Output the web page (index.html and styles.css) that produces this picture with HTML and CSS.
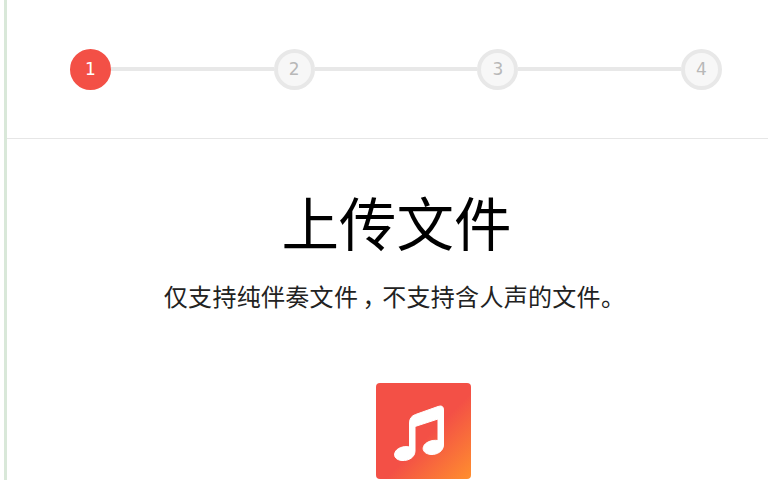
FILE: index.html
```html
<!DOCTYPE html>
<html>
<head>
    <meta charset="utf-8">
    <link rel="stylesheet" href="styles.css">
</head>
<body>
    <div class="page">
        <div class="steps">
            <div class="step active">1</div>
            <div class="line"></div>
            <div class="step">2</div>
            <div class="line"></div>
            <div class="step">3</div>
            <div class="line"></div>
            <div class="step">4</div>
        </div>

        <div class="upload">
            <h1>上传文件</h1>
            <p>仅支持纯伴奏文件<span class="comma">，</span>不支持含人声的文件。</p>
            <div class="music-icon">
                <svg width="95" height="96" viewBox="0 0 95 96">
                    <path fill="#fff" stroke="#fff" stroke-width="1" stroke-linejoin="round" d="M33.5 68V40Q33.5 33.5 39.5 31.5L62 23.5Q67.5 21.5 67.5 27V62C67.5 68 61 72 55 71.5C49 71 46 67.5 47.5 63.5C49 59.5 55.5 56.500 62 57.500V36L39 43.500V68C39 74 33 78 26 77.500C20 77 17.500 73.500 19 69.500C20.500 65.500 27 62.500 33.500 64Z"/>
                </svg>
            </div>
        </div>
    </div>
</body>
</html>
```

FILE: styles.css
```css
html, body {
    margin: 0;
    height: 100%;
    overflow: hidden;
    background: #fff;
}

body {
    font-family: "Noto Sans CJK SC", sans-serif;
    color: #222;
}

.page {
    margin-left: 4px;
    height: 100%;
    border-left: 3px solid #d9e8d9;
}

.steps {
    display: flex;
    align-items: center;
    height: 138px;
    padding: 0 46px 0 63px;
    border-bottom: 1px solid #e6e6e6;
}

.step {
    width: 33px;
    height: 33px;
    flex: none;
    border: 4px solid #e8e8e8;
    border-radius: 50%;
    background: #f7f7f7;
    color: #b8b8b8;
    font-family: "DejaVu Sans", sans-serif;
    font-size: 17px;
    line-height: 33px;
    text-align: center;
}

.step.active {
    border-color: #f35046;
    background: #f35046;
    color: #fff;
}

.line {
    flex: 1;
    height: 4px;
    background: #e8e8e8;
}

.upload {
    padding-left: 18px;
    text-align: center;
}

.upload h1 {
    margin: 41px 0 0;
    font-size: 57.5px;
    font-weight: 400;
    line-height: 82px;
    color: #000;
}

.upload p {
    margin: 16px 0 0 -4px;
    font-size: 24px;
    line-height: 36px;
    letter-spacing: 0.3px;
}

.comma {
    display: inline-block;
    width: 24px;
    font-feature-settings: "palt";
    text-align: center;
}

.music-icon {
    width: 95px;
    height: 96px;
    margin: 69px 0 0 351px;
    border-radius: 4px;
    background: linear-gradient(135deg, #f35046 0%, #f35046 55%, #ff8f2e 100%);
}
```
